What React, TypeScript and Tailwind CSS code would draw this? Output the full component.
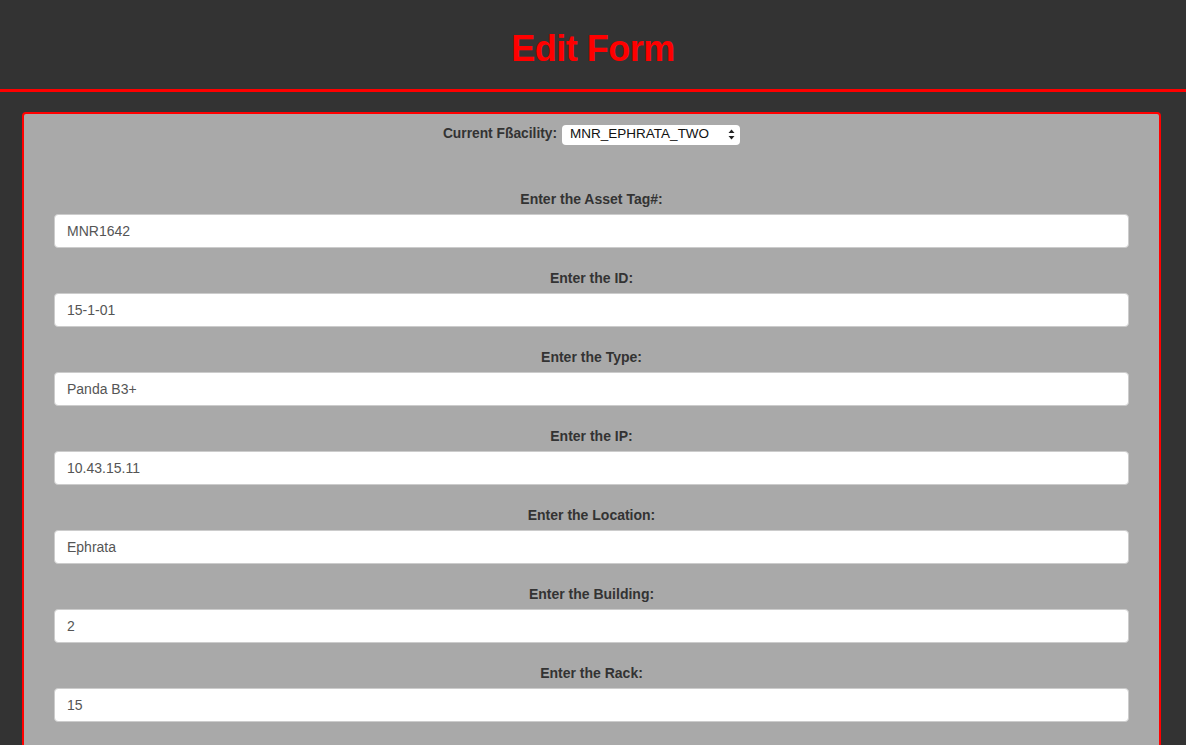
import React from "react";

const fields: [string, string][] = [
  ["Enter the Asset Tag#:", "MNR1642"],
  ["Enter the ID:", "15-1-01"],
  ["Enter the Type:", "Panda B3+"],
  ["Enter the IP:", "10.43.15.11"],
  ["Enter the Location:", "Ephrata"],
  ["Enter the Building:", "2"],
  ["Enter the Rack:", "15"],
];

export default function App() {
  return (
    <div
      className="min-h-[745px] bg-[#333333] overflow-hidden h-[745px]"
      style={{ fontFamily: '"Liberation Sans", Arial, Helvetica, sans-serif' }}
    >
      <div className="h-[92px] border-b-[3px] border-[#ff0000] flex items-center justify-center pt-[9px]">
        <h1 className="text-[36px] leading-[36px] font-bold text-[#ff0000] tracking-[-0.5px]">
          Edit Form
        </h1>
      </div>
      <div className="mt-[20px] ml-[22px] mr-[25px] border-2 border-[#ff0000] rounded-[4px] bg-[#a9a9a9] pt-[10px] px-[30px] pb-[60px]">
        <div className="flex items-center justify-center h-[21px] mb-[44px]">
          <span className="text-[13.8px] font-bold text-[#333333] mr-[5px]">Current Fßacility:</span>
          <div className="w-[178px] h-[20px] bg-white rounded-[4px] flex items-center justify-between pl-[8px] pr-[5px]">
            <span className="text-[13.5px] text-[#111111]">MNR_EPHRATA_TWO</span>
            <svg width="7" height="11" viewBox="0 0 7 11">
              <path d="M3.5 0.5 L6.5 4 L0.5 4 Z" fill="#222" />
              <path d="M3.5 10.5 L6.5 7 L0.5 7 Z" fill="#222" />
            </svg>
          </div>
        </div>
        {fields.map(([label, value]) => (
          <div key={label} className="mb-[20px]">
            <div className="text-center text-[14px] leading-[20px] font-bold text-[#333333] mb-[5px]">
              {label}
            </div>
            <div className="h-[34px] bg-white border border-[#cccccc] rounded-[4px] flex items-center px-[12px] text-[14px] text-[#555555]">
              {value}
            </div>
          </div>
        ))}
      </div>
    </div>
  );
}
